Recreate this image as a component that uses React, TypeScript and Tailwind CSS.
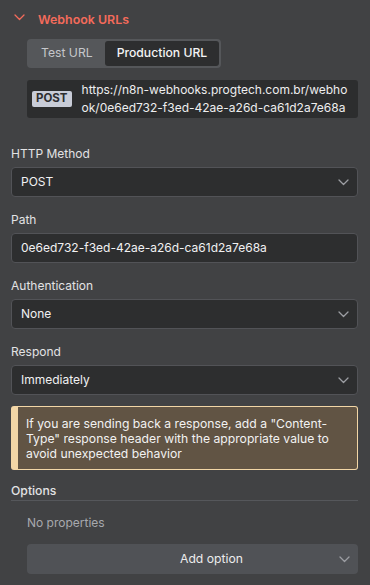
import React from "react";

const Chevron = ({ className = "" }: { className?: string }) => (
  <svg width="11" height="7" viewBox="0 0 11 7" className={className} fill="none">
    <path d="M1 1l4.5 4.5L10 1" stroke="currentColor" strokeWidth="1.3" strokeLinecap="round" strokeLinejoin="round" />
  </svg>
);

const Label = ({ children }: { children: React.ReactNode }) => (
  <div className="text-[12px] leading-[18px] text-[#e3e3e4] mb-[4px]">{children}</div>
);

const Select = ({ value }: { value: string }) => (
  <div className="h-[30px] flex items-center justify-between rounded-[4px] border border-[#525357] bg-[#2d2e2f] pl-[9px] pr-[8px]">
    <span className="text-[12px] text-[#f1f1f2]">{value}</span>
    <Chevron className="text-[#9c9ea3]" />
  </div>
);

export default function App() {
  return (
    <div
      className="w-[370px] h-[585px] overflow-hidden bg-[#414244] px-[11px] pr-[12px]"
      style={{ fontFamily: "Inter, 'Noto Sans', sans-serif" }}
    >
      {/* header */}
      <div className="flex items-center h-[18px] mt-[11px]">
        <Chevron className="text-[#f46b5b] ml-[3px] -mt-[6px]" />
        <span className="ml-[13px] text-[12.4px] font-semibold text-[#f46b5b] leading-[18px]">Webhook URLs</span>
      </div>

      <div className="pl-[16px]">
        {/* tabs */}
        <div className="mt-[10px] inline-flex rounded-[4px] bg-[#55575a] p-[2px]">
          <div className="h-[25px] px-[12px] flex items-center text-[12.2px] text-[#c5c7cb]">Test URL</div>
          <div className="h-[25px] px-[12px] flex items-center text-[12.2px] font-medium text-[#f4f4f5] bg-[#2d2e2f] rounded-[3px]">
            Production URL
          </div>
        </div>

        {/* url box */}
        <div className="mt-[12px] flex items-center bg-[#2c2d2e] rounded-[3px] pl-[5px] pr-[4px] py-[1px]">
          <span className="shrink-0 h-[16px] px-[4px] flex items-center rounded-[2px] bg-[#c8ccd7] text-[11.5px] font-bold text-[#2d2e30]">
            POST
          </span>
          <div className="ml-[10px] text-[12px] leading-[18px] text-[#eeeeef] whitespace-nowrap">
            <div>https://n8n-webhooks.progtech.com.br/webho</div>
            <div>ok/0e6ed732-f3ed-42ae-a26d-ca61d2a7e68a</div>
          </div>
        </div>
      </div>

      <div className="mt-[27px] flex flex-col gap-[14px]">
        <div>
          <Label>HTTP Method</Label>
          <Select value="POST" />
        </div>
        <div>
          <Label>Path</Label>
          <div className="h-[30px] flex items-center rounded-[4px] border border-[#525357] bg-[#2d2e2f] pl-[9px]">
            <span className="text-[12px] text-[#f1f1f2]">0e6ed732-f3ed-42ae-a26d-ca61d2a7e68a</span>
          </div>
        </div>
        <div>
          <Label>Authentication</Label>
          <Select value="None" />
        </div>
        <div>
          <Label>Respond</Label>
          <Select value="Immediately" />
        </div>
      </div>

      {/* notice */}
      <div className="mt-[11px] rounded-[3px] border border-[#f2d6a6] border-l-[7px] bg-[#615444] pl-[8px] pr-[8px] pt-[9px] pb-[8px]">
        <p className="text-[12.2px] leading-[15px] text-[#f2f2f2]">
          If you are sending back a response, add a "Content-Type" response header with the appropriate value to avoid unexpected behavior
        </p>
      </div>

      {/* options */}
      <div className="mt-[12px] text-[12.2px] leading-[18px] font-medium text-[#e3e3e4] border-b border-[#55575b]">Options</div>
      <div className="pl-[16px]">
        <div className="mt-[13px] text-[12px] leading-[18px] text-[#a7a9ae]">No properties</div>
        <div className="mt-[12px] h-[30px] flex items-center justify-between rounded-[4px] bg-[#505256] pl-[153px] pr-[8px]">
          <span className="text-[12.2px] text-[#ececed]">Add option</span>
          <Chevron className="text-[#9c9ea3]" />
        </div>
      </div>
    </div>
  );
}
